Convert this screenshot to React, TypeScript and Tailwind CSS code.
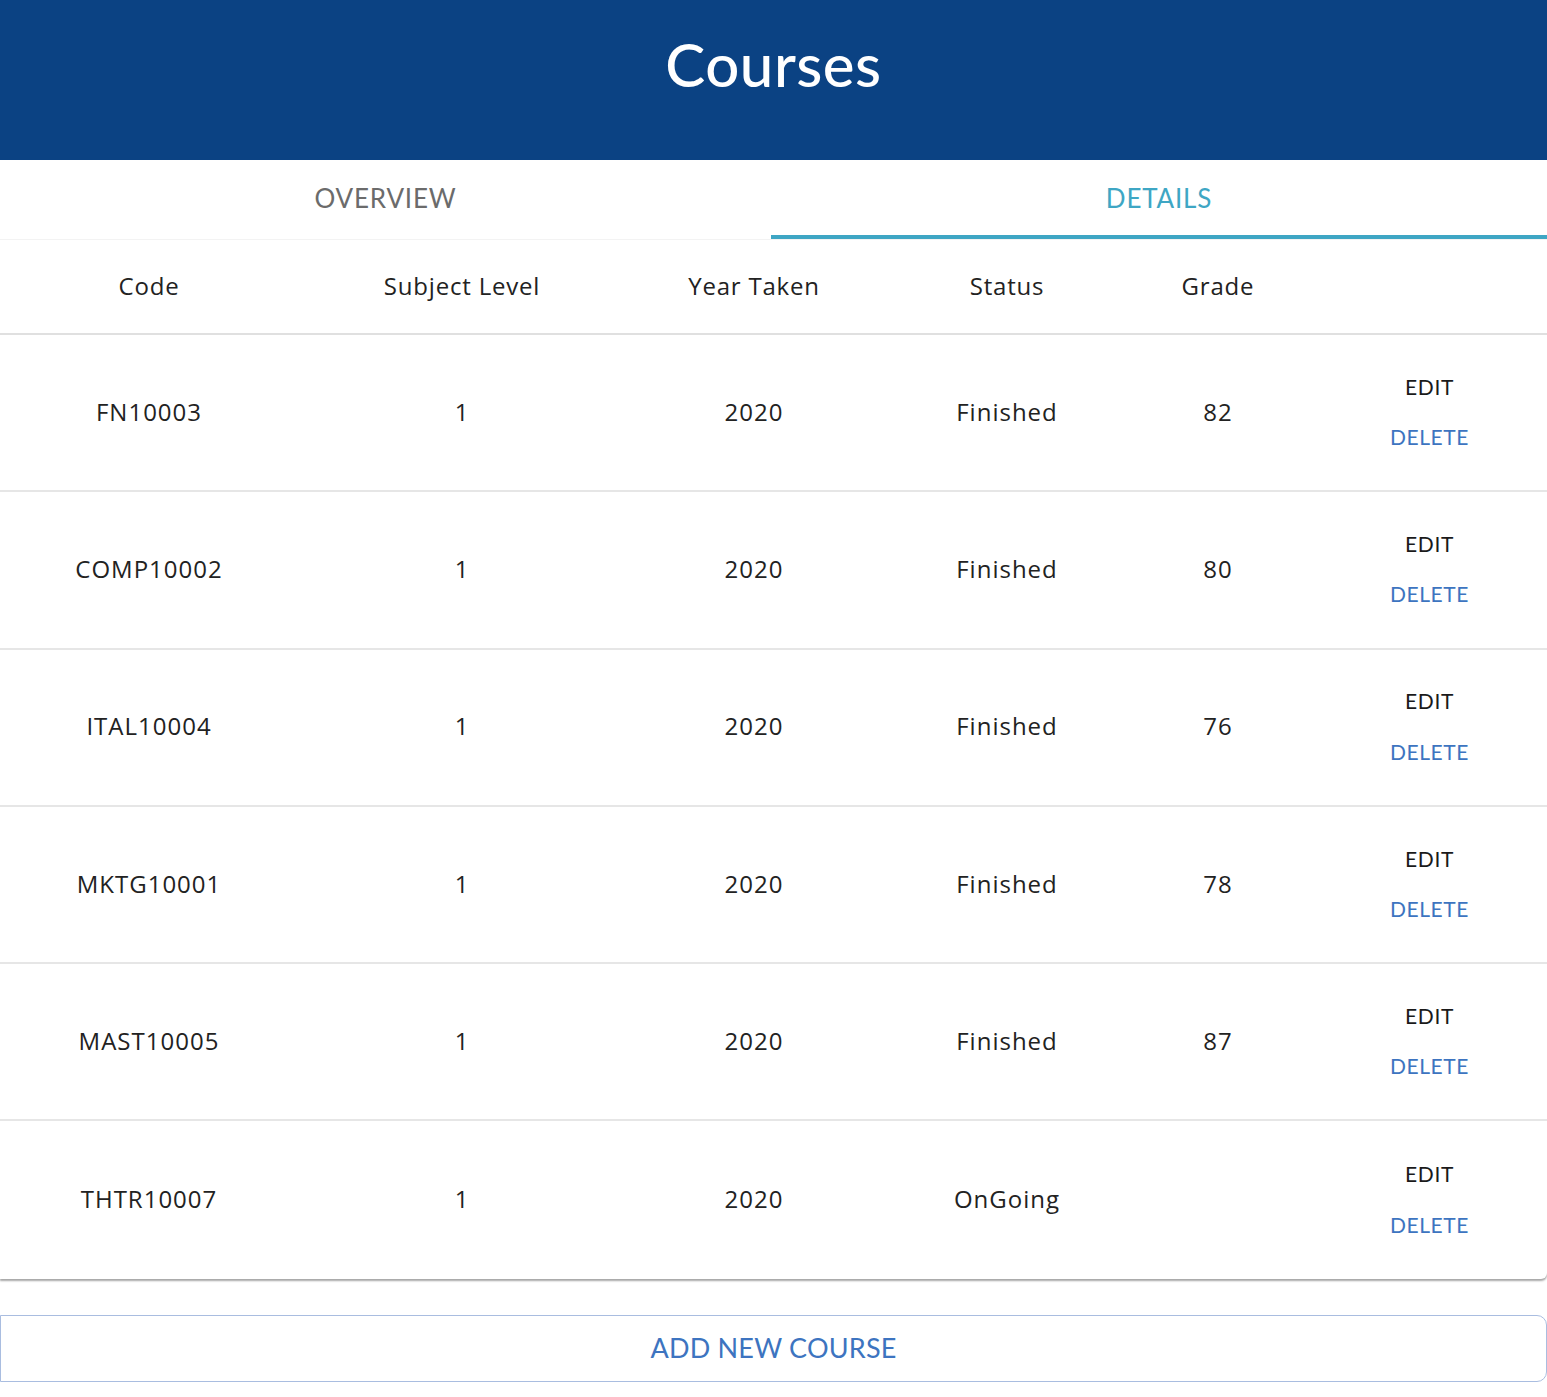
const courses = [
  { code: "FN10003", level: "1", year: "2020", status: "Finished", grade: "82" },
  { code: "COMP10002", level: "1", year: "2020", status: "Finished", grade: "80" },
  { code: "ITAL10004", level: "1", year: "2020", status: "Finished", grade: "76" },
  { code: "MKTG10001", level: "1", year: "2020", status: "Finished", grade: "78" },
  { code: "MAST10005", level: "1", year: "2020", status: "Finished", grade: "87" },
  { code: "THTR10007", level: "1", year: "2020", status: "OnGoing", grade: "" },
];

const cols = "grid grid-cols-[298px_328px_256px_250px_172px_1fr] items-center text-center";

export default function App() {
  return (
    <div className="min-h-screen bg-white font-['Open_Sans',sans-serif] text-[#222]">
      <header className="h-[160px] bg-[#0b4283] flex items-center justify-center">
        <h1 className="text-white text-[60px] font-['Lato',sans-serif] font-medium tracking-[0.5px] leading-none pb-[32px]">
          Courses
        </h1>
      </header>

      <div className="grid grid-cols-[771px_1fr] h-[80px] border-b border-[#f3f3f3] font-['Lato',sans-serif] text-[26px] tracking-[0.8px]">
        <button className="flex items-center justify-center text-[#6b6b6b] pb-[2px]">
          OVERVIEW
        </button>
        <button className="flex items-center justify-center text-[#3ea6c4] border-b-4 border-[#3ea6c4] pt-[4px] pb-[2px]">
          DETAILS
        </button>
      </div>

      <div className="rounded-br-[6px] shadow-[0_2px_2px_rgba(0,0,0,0.35)]">
        <div className={cols + " h-[95px] border-b-2 border-[#e0e0e0] text-[24px] tracking-[0.8px] pb-[2px]"}>
          <div>Code</div>
          <div>Subject Level</div>
          <div>Year Taken</div>
          <div>Status</div>
          <div>Grade</div>
          <div></div>
        </div>
        {courses.map((c, i) => (
          <div
            key={c.code}
            className={
              cols +
              " h-[157.3px] text-[24px] tracking-[1px] pb-[2px] " +
              (i < courses.length - 1 ? "border-b-2 border-[#e6e6e6]" : "")
            }
          >
            <div>{c.code}</div>
            <div>{c.level}</div>
            <div>{c.year}</div>
            <div>{c.status}</div>
            <div>{c.grade}</div>
            <div className="flex flex-col items-center gap-[19px] pl-[8px] text-[21px] font-['Lato',sans-serif] tracking-[0.6px]">
              <button className="text-[#1a1a1a]">EDIT</button>
              <button className="text-[#3d74c0]">DELETE</button>
            </div>
          </div>
        ))}
      </div>

      <div className="pt-[36px] pb-[15px]">
        <button className="w-full h-[67px] border border-[#a9bde0] rounded-r-[10px] text-[#3d74c0] text-[27px] font-['Lato',sans-serif] tracking-[0.2px] flex items-center justify-center">
          ADD NEW COURSE
        </button>
      </div>
    </div>
  );
}
